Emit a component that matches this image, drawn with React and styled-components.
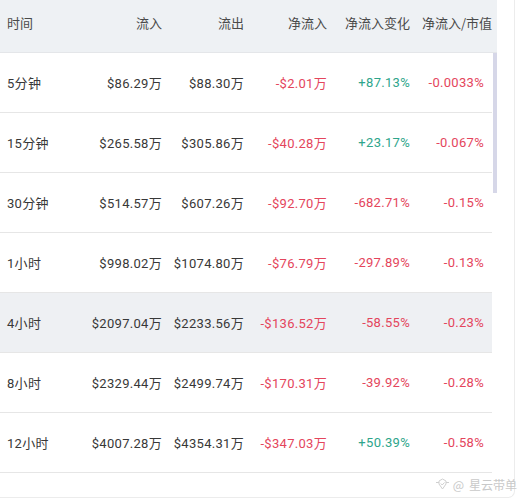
import React from "react";
import styled, { createGlobalStyle } from "styled-components";

const Global = createGlobalStyle`
  html, body { margin: 0; padding: 0; background: #fff; overflow: hidden; }
  body { font-family: Roboto, "Noto Sans CJK SC", sans-serif; }
`;

const Page = styled.div`
  width: 524px;
  height: 500px;
  position: relative;
  background: #fff;
`;

const Card = styled.div`
  width: 514px;
  height: 497px;
  border-right: 1px solid #ececec;
  border-bottom: 1px solid #ececec;
  border-bottom-right-radius: 7px;
  box-sizing: content-box;
  display: flex;
  flex-direction: column;
`;

const Table = styled.div`
  width: 497px;
  display: flex;
  flex-direction: column;
`;

const COLS = "90px 80px 82px 83px 83px 74px";

const HeaderRow = styled.div`
  display: grid;
  grid-template-columns: ${COLS} 5px;
  height: 52px;
  background: #eef1f4;
  border-bottom: 1px solid #e4e6e9;
`;

const HeadCell = styled.div`
  font-size: 13px;
  line-height: 18px;
  color: #4a4a4a;
  padding-top: 14px;
  text-align: ${(p) => (p.$left ? "left" : "right")};
  padding-left: ${(p) => (p.$left ? "7px" : "0")};
  padding-right: ${(p) => (p.$left ? "0" : p.$last ? "0" : "8px")};
  white-space: nowrap;
  font-family: "Noto Sans CJK SC", Roboto, sans-serif;
`;

const BodyWrap = styled.div`
  display: flex;
  flex-direction: row;
`;

const Rows = styled.div`
  width: 492px;
  display: flex;
  flex-direction: column;
`;

const Row = styled.div`
  display: grid;
  grid-template-columns: ${COLS};
  height: 59px;
  align-items: center;
  border-bottom: 1px solid #e6e6e6;
  background: ${(p) => (p.$hl ? "#eef0f3" : "#fff")};
`;

const Cell = styled.div`
  font-size: 13px;
  letter-spacing: 0.3px;
  color: ${(p) => (p.$tone === "red" ? "#e4455c" : p.$tone === "green" ? "#2ea58b" : "#383838")};
  text-align: ${(p) => (p.$left ? "left" : "right")};
  padding-left: ${(p) => (p.$left ? "7px" : "0")};
  padding-right: ${(p) => (p.$left ? "0" : "8px")};
  white-space: nowrap;
  font-family: Roboto, "Noto Sans CJK SC", sans-serif;
`;

const ScrollTrack = styled.div`
  width: 5px;
  padding-left: 1px;
  box-sizing: border-box;
`;

const Thumb = styled.div`
  width: 4px;
  height: 140px;
  background: #d6d7e8;
`;

const Watermark = styled.div`
  position: absolute;
  right: 7px;
  bottom: 7px;
  display: flex;
  align-items: center;
  gap: 3px;
  color: #c9c9c9;
  font-size: 12px;
  font-family: "Noto Sans CJK SC", sans-serif;
`;

const tone = (s) => (s.startsWith("-") ? "red" : s.startsWith("+") ? "green" : undefined);

const data = [
  ["5分钟", "$86.29万", "$88.30万", "-$2.01万", "+87.13%", "-0.0033%"],
  ["15分钟", "$265.58万", "$305.86万", "-$40.28万", "+23.17%", "-0.067%"],
  ["30分钟", "$514.57万", "$607.26万", "-$92.70万", "-682.71%", "-0.15%"],
  ["1小时", "$998.02万", "$1074.80万", "-$76.79万", "-297.89%", "-0.13%"],
  ["4小时", "$2097.04万", "$2233.56万", "-$136.52万", "-58.55%", "-0.23%"],
  ["8小时", "$2329.44万", "$2499.74万", "-$170.31万", "-39.92%", "-0.28%"],
  ["12小时", "$4007.28万", "$4354.31万", "-$347.03万", "+50.39%", "-0.58%"],
];

const heads = ["时间", "流入", "流出", "净流入", "净流入变化", "净流入/市值"];

export default function App() {
  return (
    <Page>
      <Global />
      <Card>
        <Table>
          <HeaderRow>
            {heads.map((h, i) => (
              <HeadCell key={h} $left={i === 0} $last={i === heads.length - 1}>
                {h}
              </HeadCell>
            ))}
            <div />
          </HeaderRow>
          <BodyWrap>
            <Rows>
              {data.map((r, i) => (
                <Row key={r[0]} $hl={i === 4}>
                  {r.map((c, j) => (
                    <Cell key={j} $left={j === 0} $tone={j >= 3 ? tone(c) : undefined}>
                      {c}
                    </Cell>
                  ))}
                </Row>
              ))}
            </Rows>
            <ScrollTrack>
              <Thumb />
            </ScrollTrack>
          </BodyWrap>
        </Table>
      </Card>
      <Watermark>
        <svg width="15" height="13" viewBox="0 0 15 13" fill="none" stroke="#cfcfcf" strokeWidth="1">
          <path d="M1 4.5 L4 4.5 M11 4.5 L14 4.5" />
          <path d="M4 3 L7.5 1 L11 3 L11 6 L7.5 11 L4 6 Z" />
          <path d="M5.8 5.5 L7.2 7 L9.5 4.5" />
        </svg>
        <span>@</span>
        <span style={{ marginLeft: 2 }}>星云带单</span>
      </Watermark>
    </Page>
  );
}
